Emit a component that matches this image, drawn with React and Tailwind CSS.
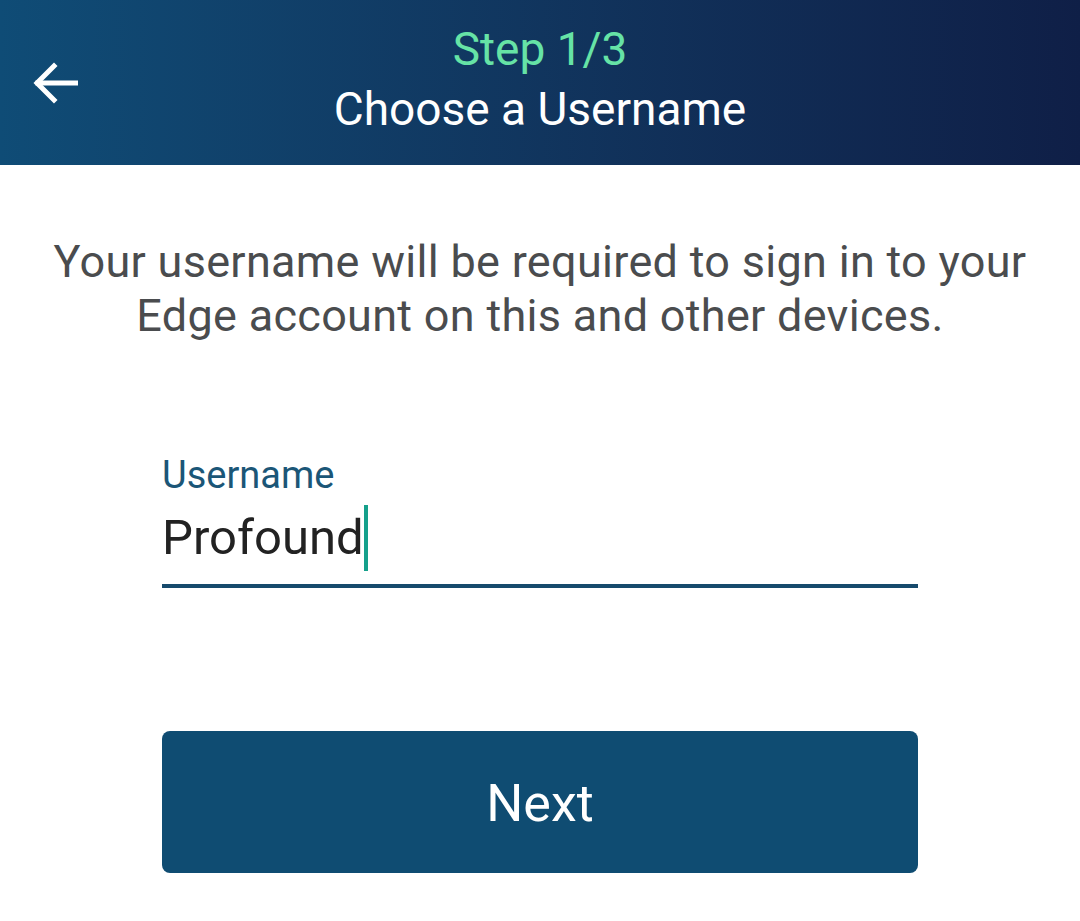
export default function App() {
  return (
    <div className="min-h-screen bg-white font-['Roboto',sans-serif]">
      <header className="h-[165px] bg-gradient-to-r from-[#0f4c76] to-[#0f1f47] flex items-center relative">
        <button className="absolute left-[30px] top-[60px] w-[50px] h-[46px] flex items-center justify-center">
          <svg width="46" height="42" viewBox="0 0 46 42" fill="none" stroke="white" strokeWidth="5" strokeLinecap="square">
            <path d="M44 21H6" />
            <path d="M22 4L5 21L22 38" />
          </svg>
        </button>
        <div className="flex-1 flex flex-col items-center pb-[8px]">
          <p className="text-[#66e3a6] text-[46px] leading-[60px]">Step 1/3</p>
          <p className="text-white text-[46px] leading-[60px]">Choose a Username</p>
        </div>
      </header>

      <div className="flex flex-col items-center">
        <p className="mt-[70px] text-center text-[#4a4c4e] text-[45px] leading-[54px] tracking-[0.3px]">
          Your username will be required to sign in to your
          <br />
          Edge account on this and other devices.
        </p>

        <div className="w-[756px] mt-[110px]">
          <label className="block text-[#1b5677] text-[38px] leading-[44px]">Username</label>
          <div className="flex items-center mt-[8px] h-[66px]">
            <span className="text-[#222222] text-[49px] leading-[60px]">Profound</span>
            <span className="w-[4px] h-[66px] bg-[#15a08b]"></span>
          </div>
          <div className="h-[4px] bg-[#164a6c] mt-[13px]"></div>
        </div>

        <button className="w-[756px] h-[142px] mt-[143px] rounded-[8px] bg-[#0f4c72] text-white text-[52px] pt-[4px]">
          Next
        </button>
      </div>
    </div>
  );
}
